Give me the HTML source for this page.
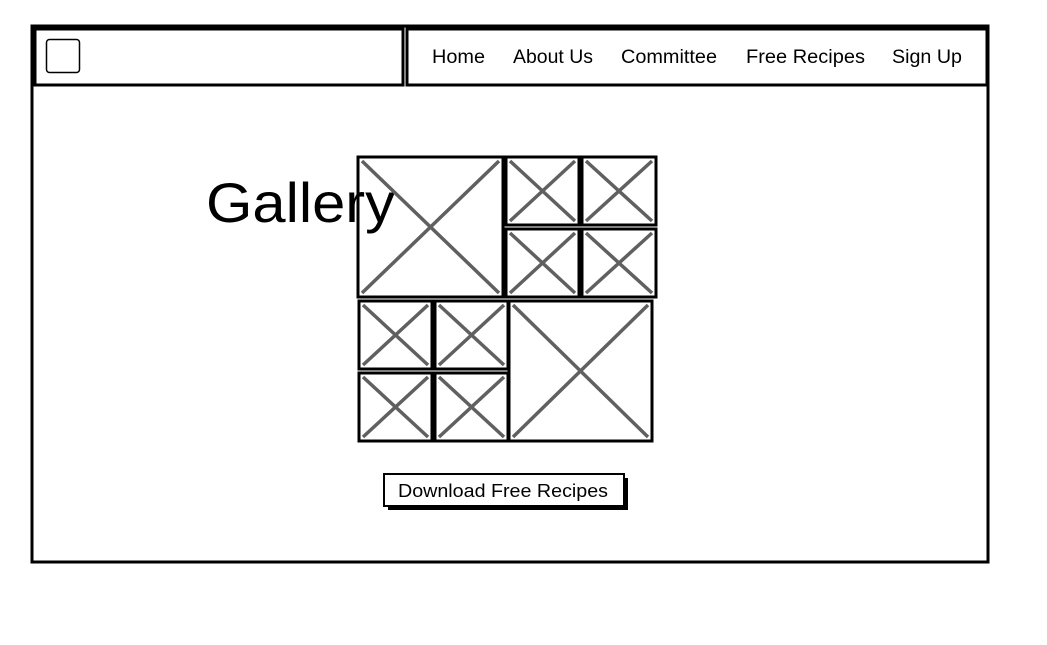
<!DOCTYPE html>
<html><head><meta charset="utf-8"><style>
html,body{margin:0;padding:0;background:#fff;width:1047px;height:645px;overflow:hidden}
svg{display:block}
text{font-family:"Liberation Sans",sans-serif;fill:#000}
</style></head><body>
<svg width="1047" height="645" viewBox="0 0 1047 645">
<rect x="32" y="26" width="956" height="536" fill="#fff" stroke="#000" stroke-width="3"/>
<rect x="35" y="29" width="368" height="56" fill="#fff" stroke="#000" stroke-width="3"/>
<rect x="407" y="29" width="580" height="56" fill="#fff" stroke="#000" stroke-width="3"/>
<rect x="46.5" y="39.5" width="33" height="33" rx="3" fill="none" stroke="#000" stroke-width="1.5"/>
<g font-size="19">
<text x="432" y="63" textLength="53" lengthAdjust="spacingAndGlyphs">Home</text>
<text x="513" y="63" textLength="80" lengthAdjust="spacingAndGlyphs">About Us</text>
<text x="621" y="63" textLength="96" lengthAdjust="spacingAndGlyphs">Committee</text>
<text x="746" y="63" textLength="119" lengthAdjust="spacingAndGlyphs">Free Recipes</text>
<text x="892" y="63" textLength="70" lengthAdjust="spacingAndGlyphs">Sign Up</text>
</g>
<text x="206" y="222" font-size="56" textLength="189" lengthAdjust="spacingAndGlyphs">Gallery</text>
<g fill="none" stroke-width="3">
<g stroke="#000">
<rect x="358" y="157" width="145" height="140"/>
<rect x="506" y="157" width="73" height="68"/>
<rect x="582" y="157" width="74" height="68"/>
<rect x="506" y="229" width="73" height="68"/>
<rect x="582" y="229" width="74" height="68"/>
<rect x="359" y="301" width="73" height="68"/>
<rect x="435" y="301" width="73" height="68"/>
<rect x="359" y="373" width="73" height="68"/>
<rect x="435" y="373" width="73" height="68"/>
<rect x="509" y="301" width="143" height="140"/>
</g>
<g stroke="#606060" stroke-width="3.5">
<path d="M362 161L499 293M499 161L362 293"/>
<path d="M510 161L575 221M575 161L510 221"/>
<path d="M586 161L652 221M652 161L586 221"/>
<path d="M510 233L575 293M575 233L510 293"/>
<path d="M586 233L652 293M652 233L586 293"/>
<path d="M363 305L428 365M428 305L363 365"/>
<path d="M439 305L504 365M504 305L439 365"/>
<path d="M363 377L428 437M428 377L363 437"/>
<path d="M439 377L504 437M504 377L439 437"/>
<path d="M513 305L648 437M648 305L513 437"/>
</g>
</g>
<rect x="388" y="478" width="240" height="32" fill="#000"/>
<rect x="384" y="474" width="240" height="32" fill="#fff" stroke="#000" stroke-width="2"/>
<text x="398" y="497" font-size="18" textLength="210" lengthAdjust="spacingAndGlyphs">Download Free Recipes</text>
</svg>
</body></html>
